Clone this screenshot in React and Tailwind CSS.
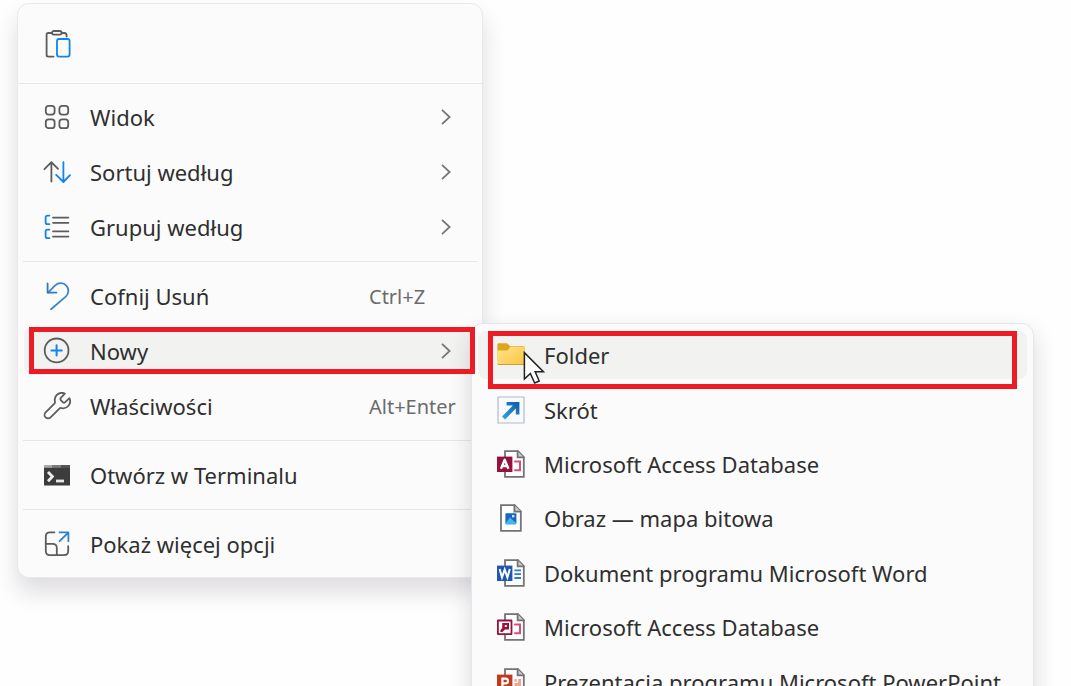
import React from "react";

const INK = "#5c5c5c";
const BLUE = "#0f86ea";

function Icon({ children }) {
  return (
    <svg viewBox="0 0 28 28" className="size-7 shrink-0" fill="none" strokeWidth="1.8" strokeLinecap="round" strokeLinejoin="round" aria-hidden="true">
      {children}
    </svg>
  );
}

function PasteIcon() {
  return (
    <Icon>
      <path d="M7.5 3H4.2Q2.6 3 2.6 4.6V25Q2.6 26.6 4.2 26.6H9.5M18 3H20.5Q22.6 3 22.6 5.6V6.5" stroke={INK} />
      <rect x="8" y="1" width="9.6" height="3.6" rx="1.8" stroke={INK} />
      <rect x="13" y="9" width="12.6" height="17.6" rx="2" stroke={BLUE} />
    </Icon>
  );
}

function ViewIcon() {
  return (
    <Icon>
      <g stroke={INK}>
        <rect x="2.8" y="2.8" width="8.8" height="8.8" rx="2.8" />
        <rect x="16.4" y="2.8" width="8.8" height="8.8" rx="2.8" />
        <rect x="2.8" y="16.4" width="8.8" height="8.8" rx="2.8" />
        <rect x="16.4" y="16.4" width="8.8" height="8.8" rx="2.8" />
      </g>
    </Icon>
  );
}

function SortIcon() {
  return (
    <Icon>
      <path d="M8.4 23.6V4.4M1.4 11.2L8.4 4.2L15 10.8" stroke={INK} />
      <path d="M20.4 4.2V23.6M13.2 16.8L20.4 24L27 17.2" stroke={BLUE} />
    </Icon>
  );
}

function GroupIcon() {
  return (
    <Icon>
      <path d="M6.4 2.6H4.6Q2.6 2.6 2.6 4.6V9.2Q2.6 11.2 4.6 11.2H6.4M6.4 16.6H4.6Q2.6 16.6 2.6 18.6V23.2Q2.6 25.2 4.6 25.2H6.4" stroke={BLUE} />
      <path d="M10 4.6H25.4M10 9.8H25.4M10 18.4H25.4M10 23.6H25.4" stroke={INK} />
    </Icon>
  );
}

function UndoIcon() {
  return (
    <Icon>
      <path d="M5 10.6L12.2 3.4C15.6 0.2 20.6 0.6 23.4 3.6C26.2 6.8 26 11.4 23 14.4L8 27.2" stroke="#3a86cc" />
      <path d="M4.6 1.4V10.6H13.4" stroke="#3a76b4" />
    </Icon>
  );
}

function NewIcon() {
  return (
    <Icon>
      <circle cx="13.6" cy="13.4" r="11.9" stroke={INK} />
      <path d="M13.6 8.2V18.6M8.4 13.4H18.8" stroke={BLUE} strokeWidth="2" />
    </Icon>
  );
}

function WrenchIcon() {
  return (
    <Icon>
      <path d="M21.8 1.6A7 7 0 0 0 12 9.8Q12.2 10.8 11.4 11.6L2.6 20.4A3.4 3.4 0 0 0 7.6 25.4L16.4 16.6Q17.2 15.8 18.2 16A7 7 0 0 0 26.4 6.2L22 10.4Q21 11.2 20 10.4L17.8 8.2Q17 7.2 17.6 6.2Z" stroke={INK} />
    </Icon>
  );
}

function TerminalIcon() {
  return (
    <Icon>
      <path d="M1 4H27V24.5H1Z" fill="#3c3c3c" />
      <path d="M1 4H9.6V6.8H1Z" fill="#a8a8a8" />
      <path d="M9.6 4H18.2V6.8H9.6Z" fill="#7c7c7c" />
      <path d="M18.2 4H27V6.8H18.2Z" fill="#555" />
      <path d="M5 11L9.4 15.6L5 20.2" stroke="#eee" strokeWidth="2.8" strokeLinecap="butt" strokeLinejoin="miter" />
      <path d="M13 18.6H21V21.4H13Z" fill="#e6e6e6" />
    </Icon>
  );
}

function MoreIcon() {
  return (
    <Icon>
      <path d="M11.4 2.4H7Q2.8 2.4 2.8 6.6V21Q2.8 25.2 7 25.2H21Q25.2 25.2 25.2 21V16.2" stroke={INK} />
      <path d="M2.8 13.8H9.6Q13.8 13.8 13.8 18V25.2" stroke={INK} />
      <path d="M16.6 11.2L25 2.8M16.6 2.4H25.4V11.2" stroke="#2f80c8" />
    </Icon>
  );
}

function FolderIcon() {
  return (
    <Icon>
      <defs>
        <linearGradient id="folder" x1="0" y1="0" x2="1" y2="1">
          <stop offset="0" stopColor="#ffe48d" />
          <stop offset="1" stopColor="#f8c640" />
        </linearGradient>
      </defs>
      <path d="M.4 3.6Q.4 2.2 1.8 2.2H10L13 5H26.2Q27.6 5 27.6 6.4V20H.4Z" fill="#dfa61c" />
      <path d="M.4 9.4H10.4L13.6 5.6H26.2Q27.6 5.6 27.6 7V22.6Q27.6 24 26.2 24H1.8Q.4 24 .4 22.6Z" fill="url(#folder)" />
      <path d="M1 23.5H27" stroke="#c9a040" strokeWidth="1" />
    </Icon>
  );
}

function ShortcutIcon() {
  return (
    <Icon>
      <defs>
        <linearGradient id="arrow" x1="0" y1="1" x2="1" y2="0">
          <stop offset="0" stopColor="#38a4e8" />
          <stop offset="1" stopColor="#0c5ca4" />
        </linearGradient>
      </defs>
      <rect x="1" y="1" width="26" height="26" fill="#f8fafd" stroke="#b2bccb" strokeWidth="1.2" />
      <path d="M9.6 6H22.4V18.6H18.8V12.6L8 23.4L5 20.4L15.8 9.6H9.6Z" fill="url(#arrow)" />
    </Icon>
  );
}

function Sheet({ x = 8 }) {
  return (
    <g>
      <path d={`M${x} 1.2H21L26.8 7V26.8H${x}Z`} fill="#fff" stroke="#737373" strokeLinejoin="miter" />
      <path d="M20.6 1.2V7.4H26.8" fill="#ccc" stroke="#737373" strokeLinejoin="miter" />
    </g>
  );
}

function AccessIcon() {
  return (
    <Icon>
      <Sheet />
      <path d="M18 11.6H23V20.2H18" stroke="#d94a7e" strokeWidth="2" strokeLinejoin="miter" />
      <rect x="0" y="6.6" width="15.4" height="15.4" fill="#98113c" />
      <path d="M4 18.8L7.7 9.8L11.4 18.8M5.4 16H10" stroke="#fff" strokeWidth="2.3" strokeLinecap="butt" />
    </Icon>
  );
}

function AccessLinkIcon() {
  return (
    <Icon>
      <Sheet />
      <path d="M18 11.6H23V20.2H18" stroke="#d94a7e" strokeWidth="2" strokeLinejoin="miter" />
      <rect x=".9" y="7.5" width="13.6" height="13.6" fill="#fff" stroke="#98113c" strokeWidth="1.8" />
      <path d="M5.2 10H12V16.4H8L5.4 19H3.4V17L5.2 15.2Z" fill="#98113c" />
      <path d="M7.8 12H9.8V14H7.8Z" fill="#fff" />
    </Icon>
  );
}

function BitmapIcon() {
  return (
    <Icon>
      <path d="M4 1.2H17.6L23.8 7.4V26.8H4Z" fill="#fff" stroke="#737373" strokeLinejoin="miter" />
      <path d="M17.4 1.2V7.6H23.8" fill="#ccc" stroke="#737373" strokeLinejoin="miter" />
      <rect x="8.4" y="9.2" width="11" height="11" rx="1" fill="#1769bd" />
      <path d="M8.4 19.4L13 13.6L19.4 19.2Q19.4 20.2 18.4 20.2H9.4Q8.4 20.2 8.4 19.2Z" fill="#46b4f0" />
      <rect x="15" y="11" width="2.4" height="2.4" fill="#c6e8ff" />
    </Icon>
  );
}

function WordIcon() {
  return (
    <Icon>
      <Sheet />
      <path d="M17.4 11.4H24M17.4 15.2H24M17.4 19H24" stroke="#2c7bd4" strokeLinecap="butt" />
      <rect x="0" y="6.6" width="15.4" height="15.4" fill="#1e57b0" />
      <path d="M2.6 10L5 18.4L7.7 10.6L10.4 18.4L12.8 10" stroke="#fff" strokeWidth="2" strokeLinecap="butt" strokeLinejoin="miter" />
    </Icon>
  );
}

function PowerPointIcon() {
  return (
    <Icon>
      <Sheet />
      <path d="M17.4 11H24V20H17.4Z" fill="#f3a48f" />
      <path d="M20.4 9.6V14.4H16.6" stroke="#fff" strokeWidth="1.4" />
      <rect x="0" y="6.6" width="15.4" height="15.4" fill="#c03a20" />
      <path d="M5.4 19V10.6H8.4Q11 10.6 11 13T8.4 15.4H5.4" stroke="#fff" strokeWidth="2.2" strokeLinecap="butt" strokeLinejoin="miter" />
    </Icon>
  );
}

function Chevron() {
  return (
    <svg viewBox="0 0 10 16" className="mr-[25px] h-4 w-[10px]" fill="none" stroke="#777" strokeWidth="1.8" aria-hidden="true">
      <path d="M1 .8L8.6 8L1 15.2" />
    </svg>
  );
}

function MenuItem({ icon: ItemIcon, label, hint, shortcut, active }) {
  return (
    <li className="flex py-[3px]">
      <button type="button" className={`flex w-full items-center rounded-lg pl-[19px] text-left ${active ? "bg-[#f2f2f0]" : "hover:bg-[#f2f2f0]"}`}>
        <ItemIcon />
        <span className="ml-[19px] grow whitespace-nowrap">{label}</span>
        {hint && <kbd className="w-[107px] pt-[2px] font-[inherit] text-[20px] text-[#6b6b6b]">{hint}</kbd>}
        {shortcut && <Chevron />}
      </button>
    </li>
  );
}

function MenuGroup({ items, className }) {
  return (
    <ul className={`grid auto-rows-fr px-[6px] ${className}`}>
      {items.map((item, i) => (
        <MenuItem key={i} {...item} />
      ))}
    </ul>
  );
}

function Divider() {
  return <hr className="mx-[5px] my-[7px] border-[#e6e6e6]" />;
}

const viewItems = [
  { icon: ViewIcon, label: "Widok", shortcut: true },
  { icon: SortIcon, label: "Sortuj według", shortcut: true },
  { icon: GroupIcon, label: "Grupuj według", shortcut: true },
];

const editItems = [
  { icon: UndoIcon, label: "Cofnij Usuń", hint: "Ctrl+Z" },
  { icon: NewIcon, label: "Nowy", shortcut: true, active: true },
  { icon: WrenchIcon, label: "Właściwości", hint: "Alt+Enter" },
];

const newItems = [
  { icon: FolderIcon, label: "Folder", active: true },
  { icon: ShortcutIcon, label: "Skrót" },
  { icon: AccessIcon, label: "Microsoft Access Database" },
  { icon: BitmapIcon, label: "Obraz — mapa bitowa" },
  { icon: WordIcon, label: "Dokument programu Microsoft Word" },
  { icon: AccessLinkIcon, label: "Microsoft Access Database" },
  { icon: PowerPointIcon, label: "Prezentacja programu Microsoft PowerPoint" },
];

export default function App() {
  return (
    <main className="relative h-screen overflow-hidden bg-[#fefefe] font-['Noto_Sans','Open_Sans',sans-serif] text-[22px] leading-[30px] text-[#2f2f2f]">
      <nav aria-label="Menu kontekstowe" className="absolute top-[3px] left-[17px] w-[466px] rounded-xl border border-[#e9e9e9] bg-[#fbfbfb] pb-[6px] shadow-[0_14px_22px_rgba(40,30,50,0.15)]">
        <div className="flex h-[79px] items-center pl-[26px]">
          <button type="button" aria-label="Wklej">
            <PasteIcon />
          </button>
        </div>
        <hr className="mb-[6px] border-[#e6e6e6]" />
        <MenuGroup className="h-[164px]" items={viewItems} />
        <Divider />
        <MenuGroup className="h-[164px]" items={editItems} />
        <Divider />
        <MenuGroup className="h-[54px]" items={[{ icon: TerminalIcon, label: "Otwórz w Terminalu" }]} />
        <Divider />
        <MenuGroup className="h-[54px]" items={[{ icon: MoreIcon, label: "Pokaż więcej opcji" }]} />
      </nav>

      <nav aria-label="Nowy" className="absolute top-[323px] left-[471px] w-[563px] rounded-xl border border-[#e6e6e8] bg-[#fbfbfb] py-1 shadow-[0_10px_22px_rgba(40,30,50,0.17)]">
        <MenuGroup className="h-[381px]" items={newItems} />
      </nav>

      <div className="pointer-events-none absolute top-[327px] left-[29px] h-[47px] w-[446px] border-5 border-[#ed1c24]" />
      <div className="pointer-events-none absolute top-[331px] left-[488px] h-[58px] w-[529px] border-5 border-[#ed1c24]" />
      <svg viewBox="0 0 22 34" className="pointer-events-none absolute top-[351px] left-[523px] h-[34px] w-[22px]" aria-hidden="true">
        <path d="M1.4 1.6V28L7.4 22.4L11.6 32L16.2 30L12.2 20.8H20.4Z" fill="#fff" stroke="#222" strokeWidth="1.5" />
      </svg>
    </main>
  );
}
